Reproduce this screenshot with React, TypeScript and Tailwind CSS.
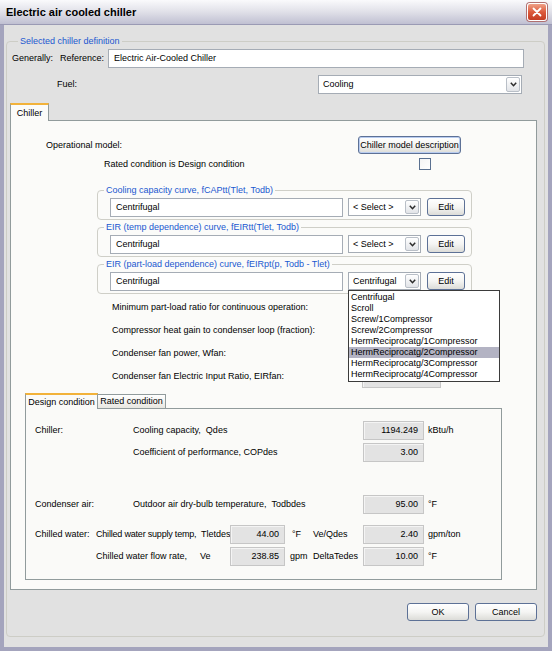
import React from 'react';

// shared font stack (Tahoma look-alike)
const FONT = "font-['Liberation_Sans',Arial,sans-serif]";

function Chevron() {
  return (
    <svg width="7" height="5" viewBox="0 0 7 5">
      <path d="M0.8 0.8 L3.5 3.7 L6.2 0.8" fill="none" stroke="#2b2b2b" strokeWidth="1.5" />
    </svg>
  );
}

function Combo({ value, className }: { value: string; className: string }) {
  return (
    <div className={`flex items-stretch border border-[#a5acb5] bg-white ${className}`}>
      <span className="flex flex-1 items-center whitespace-nowrap pl-[4px]">{value}</span>
      <span className="m-[1px] flex w-[14px] items-center justify-center rounded-[2px] border border-[#b9bfc7] bg-gradient-to-b from-white to-[#e2e4e8]">
        <Chevron />
      </span>
    </div>
  );
}

function WinButton({ children, className }: { children: React.ReactNode; className: string }) {
  return (
    <button
      className={`flex h-[18px] items-center justify-center whitespace-nowrap rounded-[3px] border border-[#5d7196] bg-gradient-to-b from-white via-[#f5f5f3] to-[#dcdcd8] text-[9px] leading-none text-black ${className}`}
    >
      {children}
    </button>
  );
}

function ValBox({ value, className }: { value: string; className: string }) {
  return (
    <div
      className={`flex h-[19px] items-center justify-end border border-[#c6c6c6] bg-[#e3e3e3] pr-[5px] shadow-[inset_1px_1px_0_#f4f4f4] ${className}`}
    >
      {value}
    </div>
  );
}

function TextInput({ value, className }: { value: string; className: string }) {
  return (
    <div className={`flex h-[19px] items-center border border-[#a5acb5] bg-white pl-[5px] ${className}`}>{value}</div>
  );
}

const compressorTypes = [
  'Centrifugal',
  'Scroll',
  'Screw/1Compressor',
  'Screw/2Compressor',
  'HermReciprocatg/1Compressor',
  'HermReciprocatg/2Compressor',
  'HermReciprocatg/3Compressor',
  'HermReciprocatg/4Compressor',
];

function CurveBox({
  legend,
  selected,
  open,
  className,
}: {
  legend: string;
  selected: string;
  open?: boolean;
  className: string;
}) {
  return (
    <fieldset className={`ml-[86px] w-[375px] rounded-[4px] border border-[#cfcfc8] pb-[2px] ${className}`}>
      <legend className="ml-[6px] px-[2px] leading-[12px] text-[#2158d0]">{legend}</legend>
      <div className="mt-[1px] flex h-[20px] items-center">
        <TextInput value="Centrifugal" className="ml-[12px] w-[233px]" />
        <div className="relative ml-[5px]">
          <Combo value={selected} className="h-[18px] w-[73px]" />
          {open && (
            <div className="absolute left-0 top-[18px] z-20 w-[152px] border border-[#3b3b3b] bg-white py-[1px]">
              {compressorTypes.map((t, i) => (
                <div
                  key={t}
                  className={
                    i === 5
                      ? 'h-[11px] whitespace-nowrap bg-[#b3b3c3] pl-[2px] leading-[11px]'
                      : 'h-[11px] whitespace-nowrap pl-[2px] leading-[11px]'
                  }
                >
                  {t}
                </div>
              ))}
            </div>
          )}
        </div>
        <WinButton className="ml-[6px] w-[38px]">Edit</WinButton>
      </div>
    </fieldset>
  );
}

export default function App() {
  return (
    <div className={`flex h-[651px] w-[552px] flex-col overflow-hidden bg-[#e1e1e1] text-[9px] leading-[11px] text-black ${FONT}`}>
      {/* title bar */}
      <div className="flex h-[25px] shrink-0 items-center justify-between border-b border-[#9a9ab4] bg-gradient-to-b from-[#fafafc] via-[#e0e0e8] to-[#c0c0d2] pl-[6px] pr-[5px]">
        <span className="text-[11px] font-bold leading-none">Electric air cooled chiller</span>
        <button className="flex h-[18px] w-[20px] items-center justify-center rounded-[3px] border border-white bg-gradient-to-b from-[#eea088] via-[#dc5a3c] to-[#c43c22] shadow-[0_0_0_1px_#b07070]">
          <svg width="10" height="10" viewBox="0 0 10 10">
            <path d="M1.5 1.5 L8.5 8.5 M8.5 1.5 L1.5 8.5" stroke="white" strokeWidth="1.8" strokeLinecap="round" />
          </svg>
        </button>
      </div>

      {/* window frame */}
      <div className="flex flex-1 flex-col border-x-4 border-b-4 border-[#a4a4bd] px-[2px]">
        <fieldset className="mb-[10px] mr-[1px] mt-[10px] flex-1 rounded-[4px] border border-[#cdcdc6]">
          <legend className="ml-[11px] px-[2px] leading-[12px] text-[#2158d0]">Selected chiller definition</legend>

          <div className="mt-[2px] flex h-[19px] items-center whitespace-nowrap">
            <span className="ml-[5px] w-[48px]">Generally:</span>
            <span className="w-[48px]">Reference:</span>
            <TextInput value="Electric Air-Cooled Chiller" className="w-[416px]" />
          </div>

          <div className="mt-[7px] flex h-[19px] items-center">
            <span className="ml-[50px] w-[261px]">Fuel:</span>
            <Combo value="Cooling" className="h-[19px] w-[204px]" />
          </div>

          {/* Chiller tab */}
          <div className="ml-[3px] mt-[9px] flex w-[527px] flex-col">
            <div className="flex h-[17px] items-end">
              <div className="relative z-10 -mb-px flex h-[18px] w-[39px] items-center justify-center border-x border-t-2 border-[#919b9c] border-t-[#f2b23a] bg-[#fbfbf9]">
                Chiller
              </div>
            </div>
            <div className="flex h-[470px] flex-col whitespace-nowrap border border-[#919b9c] bg-[#fbfbf9]">
              <div className="mt-[15px] flex h-[18px] items-center">
                <span className="ml-[35px] w-[312px]">Operational model:</span>
                <WinButton className="w-[103px] border-[#3d5c94] shadow-[inset_0_0_0_1px_#b8ccf0]">
                  Chiller model description
                </WinButton>
              </div>
              <div className="mt-[4px] flex h-[12px] items-center">
                <span className="ml-[93px] w-[315px]">Rated condition is Design condition</span>
                <span className="h-[12px] w-[12px] border border-[#5a7090] bg-gradient-to-br from-[#f4f4f4] to-white" />
              </div>

              <CurveBox legend="Cooling capacity curve, fCAPtt(Tlet, Todb)" selected="< Select >" className="mt-[14px]" />
              <CurveBox legend="EIR (temp dependence) curve, fEIRtt(Tlet, Todb)" selected="< Select >" className="mt-[1px]" />
              <CurveBox
                legend="EIR (part-load dependence) curve, fEIRpt(p, Todb - Tlet)"
                selected="Centrifugal"
                open
                className="mt-[1px]"
              />

              <div className="mt-[2px] flex flex-col">
                {[
                  ['Minimum part-load ratio for continuous operation:', ''],
                  ['Compressor heat gain to condenser loop (fraction):', ''],
                  ['Condenser fan power, Wfan:', ''],
                  ['Condenser fan Electric Input Ratio, EIRfan:', '0.0000'],
                ].map(([label, v]) => (
                  <div key={label} className="flex h-[23px] items-center">
                    <span className="ml-[101px] w-[250px]">{label}</span>
                    <ValBox value={v} className="mt-[4px] w-[79px]" />
                  </div>
                ))}
              </div>

              {/* inner tabs */}
              <div className="ml-[14px] mt-[5px] flex w-[477px] flex-col">
                <div className="flex h-[15px] items-end">
                  <div className="relative z-10 -mb-px flex h-[16px] w-[73px] items-center justify-center border-x border-t-2 border-[#919b9c] border-t-[#f2b23a] bg-[#fafaf8]">
                    Design condition
                  </div>
                  <div className="flex h-[14px] w-[68px] items-center justify-center border-r border-t border-[#919b9c] bg-gradient-to-b from-white to-[#e8e7e1]">
                    Rated condition
                  </div>
                </div>
                <div className="flex h-[172px] flex-col border border-[#919b9c] bg-[#fafaf8]">
                  <div className="mt-[12px] flex h-[19px] items-center">
                    <span className="ml-[9px] w-[98px]">Chiller:</span>
                    <span className="w-[230px] whitespace-pre">Cooling capacity,  Qdes</span>
                    <ValBox value="1194.249" className="w-[61px]" />
                    <span className="ml-[4px]">kBtu/h</span>
                  </div>
                  <div className="mt-[3px] flex h-[19px] items-center">
                    <span className="ml-[107px] w-[230px]">Coefficient of performance, COPdes</span>
                    <ValBox value="3.00" className="w-[61px]" />
                  </div>
                  <div className="mt-[33px] flex h-[19px] items-center">
                    <span className="ml-[9px] w-[98px]">Condenser air:</span>
                    <span className="w-[230px] whitespace-pre">Outdoor air dry-bulb temperature,  Todbdes</span>
                    <ValBox value="95.00" className="w-[61px]" />
                    <span className="ml-[4px]">°F</span>
                  </div>
                  <div className="mt-[11px] flex h-[19px] items-center">
                    <span className="ml-[9px] w-[61px]">Chilled water:</span>
                    <span className="w-[105px] tracking-[-0.2px]">Chilled water supply temp,</span>
                    <span className="w-[29px]">Tletdes</span>
                    <ValBox value="44.00" className="w-[55px]" />
                    <span className="w-[28px] pl-[7px]">°F</span>
                    <span className="w-[50px]">Ve/Qdes</span>
                    <ValBox value="2.40" className="w-[61px]" />
                    <span className="ml-[4px]">gpm/ton</span>
                  </div>
                  <div className="mt-[3px] flex h-[19px] items-center">
                    <span className="ml-[70px] w-[104px]">Chilled water flow rate,</span>
                    <span className="w-[30px]">Ve</span>
                    <ValBox value="238.85" className="w-[55px]" />
                    <span className="w-[28px] pl-[5px]">gpm</span>
                    <span className="w-[50px]">DeltaTedes</span>
                    <ValBox value="10.00" className="w-[61px]" />
                    <span className="ml-[4px]">°F</span>
                  </div>
                </div>
              </div>
            </div>
          </div>

          <div className="mr-[7px] mt-[13px] flex justify-end gap-[6px]">
            <WinButton className="w-[62px]">OK</WinButton>
            <WinButton className="w-[62px]">Cancel</WinButton>
          </div>
        </fieldset>
      </div>
    </div>
  );
}
